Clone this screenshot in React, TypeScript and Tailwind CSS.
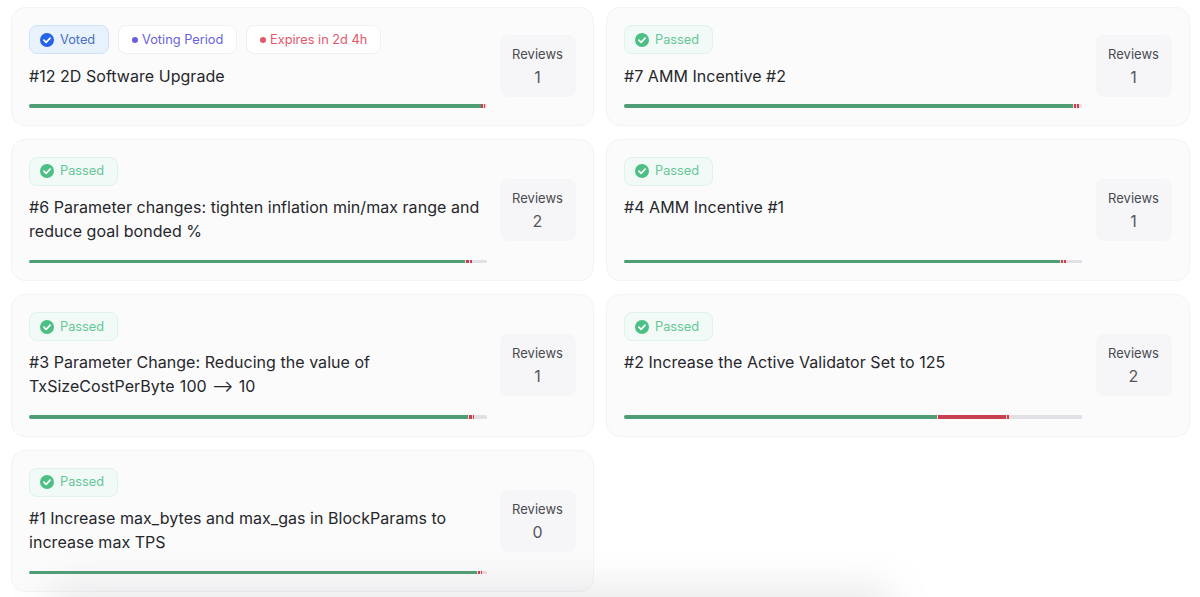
import React from "react";

type Seg = { w: number; c: string };

const CheckCircle = ({ color }: { color: string }) => (
  <svg width="14" height="14" viewBox="0 0 14 14" className="shrink-0">
    <circle cx="7" cy="7" r="7" fill={color} />
    <path d="M3.9 7.2l2.2 2.2 4-4.2" fill="none" stroke="#fff" strokeWidth="1.7" strokeLinecap="round" strokeLinejoin="round" />
  </svg>
);

const Passed = () => (
  <div className="h-[29px] w-[89px] flex items-center gap-[6px] pl-[10px] rounded-lg border border-[#dff3e8] bg-[#f1faf6] text-[12.8px] text-[#66c797]">
    <CheckCircle color="#4cbf85" />
    <span>Passed</span>
  </div>
);

const Bar = ({ segs }: { segs: Seg[] }) => (
  <div className="flex h-[3.5px] w-[458px] bg-[#e0e0e6] rounded-full overflow-hidden">
    {segs.map((s, i) => (
      <div key={i} className="h-full" style={{ width: s.w, background: s.c }} />
    ))}
  </div>
);

const G = "#4f9d75";
const R = "#c9404f";
const W = "#f3d8dc";
const L = "#e0e0e6";

const Card = ({
  title,
  reviews,
  segs,
  tall,
  badges,
}: {
  title: React.ReactNode;
  reviews: number;
  segs: Seg[];
  tall?: boolean;
  badges?: React.ReactNode;
}) => (
  <div className={`flex justify-between items-center rounded-[14px] border border-[#f3f3f5] bg-[#fbfbfc] px-[17px] ${tall ? "h-[142.5px]" : "h-[118.5px]"}`}>
    <div className="w-[458px] flex flex-col">
      <div className="flex gap-[9px]">{badges ?? <Passed />}</div>
      <div className={`text-[16px] leading-[24px] tracking-[0.04px] text-[#26272b] ${tall ? "mt-[9px] h-[48px]" : "mt-[10px] h-[24px]"}`}>{title}</div>
      <div className={tall ? "mt-[17px]" : "mt-[16px]"}>
        <Bar segs={segs} />
      </div>
    </div>
    <div className="w-[76px] h-[62px] rounded-lg bg-[#f6f6f8] flex flex-col items-center pt-[10px] text-[#4a4b50]">
      <div className="text-[13px] leading-[18px]">Reviews</div>
      <div className="text-[16px] leading-[24px] mt-[2px] text-[#55565b]">{reviews}</div>
    </div>
  </div>
);

export default function App() {
  return (
    <div className="relative w-[1200px] h-[597px] overflow-hidden bg-white font-['Inter',sans-serif]">
      <div className="grid grid-cols-[582.5px_583.5px] gap-x-[12.5px] gap-y-[13px] pl-[11px] pt-[7px] items-start">
        <Card
          title="#12 2D Software Upgrade"
          reviews={1}
          segs={[
            { w: 452, c: G },
            { w: 2, c: R },
            { w: 1, c: W },
            { w: 1, c: R },
            { w: 2, c: W },
          ]}
          badges={
            <>
              <div className="h-[29px] w-[80px] flex items-center gap-[6px] pl-[10px] rounded-lg border border-[#cfe2f8] bg-[#e8f2fc] text-[12.8px] text-[#4a6fc4]">
                <CheckCircle color="#2563eb" />
                <span>Voted</span>
              </div>
              <div className="h-[29px] w-[119px] flex items-center gap-[4px] pl-[13px] rounded-lg border border-[#f0f0f3] bg-white text-[12.8px] text-[#6a5fe0]">
                <span className="w-[6px] h-[6px] rounded-full bg-[#6a5fe0]" />
                <span>Voting Period</span>
              </div>
              <div className="h-[29px] w-[135px] flex items-center gap-[4px] pl-[13px] rounded-lg border border-[#f0f0f3] bg-white text-[12.8px] text-[#e5566a]">
                <span className="w-[6px] h-[6px] rounded-full bg-[#e5566a]" />
                <span>Expires in 2d 4h</span>
              </div>
            </>
          }
        />
        <Card
          title="#7 AMM Incentive #2"
          reviews={1}
          segs={[
            { w: 449, c: G },
            { w: 1, c: W },
            { w: 2, c: R },
            { w: 1, c: W },
            { w: 2, c: R },
            { w: 3, c: W },
          ]}
        />
        <Card
          tall
          title="#6 Parameter changes: tighten inflation min/max range and reduce goal bonded %"
          reviews={2}
          segs={[
            { w: 436, c: G },
            { w: 1, c: W },
            { w: 3, c: R },
            { w: 1, c: W },
            { w: 2, c: R },
            { w: 15, c: L },
          ]}
        />
        <Card
          tall
          title="#4 AMM Incentive #1"
          reviews={1}
          segs={[
            { w: 436, c: G },
            { w: 1, c: W },
            { w: 2, c: R },
            { w: 1, c: W },
            { w: 2, c: R },
            { w: 16, c: L },
          ]}
        />
        <Card
          tall
          title={
            <>
              #3 Parameter Change: Reducing the value of <span className="[word-spacing:0.7px]">TxSizeCostPerByte 100 ⟶ 10</span>
            </>
          }
          reviews={1}
          segs={[
            { w: 439, c: G },
            { w: 1, c: W },
            { w: 3, c: R },
            { w: 1, c: W },
            { w: 1, c: R },
            { w: 13, c: L },
          ]}
        />
        <Card
          tall
          title="#2 Increase the Active Validator Set to 125"
          reviews={2}
          segs={[
            { w: 313, c: G },
            { w: 1, c: W },
            { w: 68, c: R },
            { w: 1, c: W },
            { w: 2, c: R },
            { w: 2, c: W },
            { w: 71, c: L },
          ]}
        />
        <Card
          tall
          title="#1 Increase max_bytes and max_gas in BlockParams to increase max TPS"
          reviews={0}
          segs={[
            { w: 448, c: G },
            { w: 1, c: W },
            { w: 2, c: R },
            { w: 1, c: W },
            { w: 1, c: R },
            { w: 5, c: W },
          ]}
        />
      </div>
      <div className="absolute left-[50px] top-[588px] w-[840px] h-[60px] bg-[#8f8f96] opacity-[0.2] blur-[20px] pointer-events-none" />
    </div>
  );
}
